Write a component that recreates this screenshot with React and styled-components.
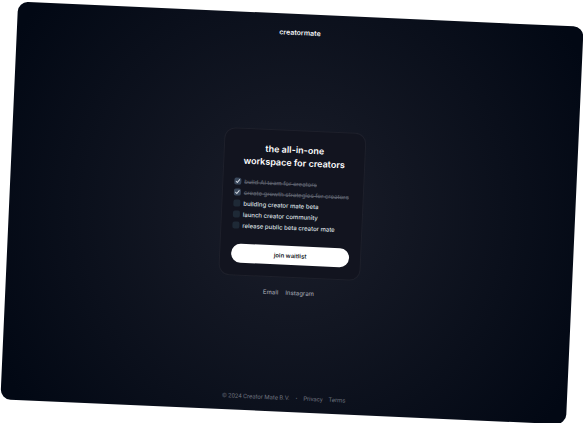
import React, { useState } from "react";
import styled, { createGlobalStyle } from "styled-components";

const GlobalStyle = createGlobalStyle`
  *, *::before, *::after { box-sizing: border-box; }
  body {
    margin: 0;
    background: #ffffff;
    font-family: Inter, "Liberation Sans", sans-serif;
    -webkit-font-smoothing: antialiased;
  }
`;

const Stage = styled.div`
  display: flex;
  min-height: 100vh;
  padding: 14px 8px 11px 9px;
  overflow: hidden;
`;

const Panel = styled.div`
  flex: 1;
  display: grid;
  grid-template-rows: 1fr auto 1fr;
  justify-items: center;
  border-radius: 10px;
  background: radial-gradient(circle at center, #1b1e2a 0%, #020814 95%);
  transform: rotate(2.55deg);
`;

const Header = styled.header`
  padding-top: 14px;
`;

const Brand = styled.a`
  display: block;
  color: #f4f5f7;
  font-size: 7px;
  font-weight: 600;
  line-height: 9px;
  text-decoration: none;
`;

const Main = styled.main`
  display: flex;
  flex-direction: column;
  align-items: center;
  gap: 11px;
`;

const Card = styled.section`
  width: 142px;
  padding: 12px 11px;
  border: 1px solid #1e202b;
  border-radius: 11px;
  background: #12141f;
`;

const Title = styled.h1`
  margin: 0 0 9px;
  color: #ffffff;
  font-size: 9px;
  font-weight: 600;
  line-height: 13px;
  text-align: center;
  white-space: nowrap;
`;

const Checklist = styled.ul`
  margin: 0 0 13px;
  padding: 0;
  list-style: none;
`;

const Task = styled.label`
  display: flex;
  align-items: center;
  gap: 3px;
  color: ${(p) => (p.$done ? "#5c606c" : "#dfe1e6")};
  font-size: 6px;
  font-weight: 500;
  line-height: 11px;
  text-decoration: ${(p) => (p.$done ? "line-through" : "none")};
  white-space: nowrap;
`;

const Tick = styled.span`
  display: grid;
  place-items: center;
  flex: none;

  & > * { grid-area: 1 / 1; }
`;

const TickInput = styled.input`
  appearance: none;
  width: 7px;
  height: 7px;
  margin: 0;
  border-radius: 2px;
  background: #1e2936;

  &:checked { background: #3a485c; }
`;

const TickMark = styled.svg`
  width: 5px;
  height: 5px;
  fill: none;
  stroke: #d5dbe4;
  stroke-width: 2;
  stroke-linecap: round;
  stroke-linejoin: round;
  pointer-events: none;
`;

const JoinButton = styled.button`
  display: block;
  width: 100%;
  height: 19px;
  padding: 0;
  border: 0;
  border-radius: 10px;
  background: #ffffff;
  color: #151925;
  font: inherit;
  font-size: 6px;
  font-weight: 600;
  line-height: 9px;
`;

const Links = styled.nav`
  display: flex;
  gap: 7px;
  font-size: 6px;
  font-weight: 500;
  line-height: 8px;
`;

const TextLink = styled.a`
  color: ${(p) => (p.$muted ? "#6f737e" : "#9b9ea7")};
  text-decoration: none;
`;

const Footer = styled.footer`
  align-self: end;
  display: flex;
  gap: 6px;
  padding-bottom: 10px;
  color: #6f737e;
  font-family: Roboto, "Liberation Sans", sans-serif;
  font-size: 6px;
  line-height: 8px;
`;

const Dot = styled.span`
  color: #8a8e99;
  font-weight: 700;
`;

const initialTasks = [
  { id: "team", label: "build AI team for creators", done: true },
  { id: "growth", label: "create growth strategies for creators", done: true },
  { id: "beta", label: "building creator mate beta", done: false },
  { id: "community", label: "launch creator community", done: false },
  { id: "public", label: "release public beta creator mate", done: false },
];

export default function App() {
  const [tasks, setTasks] = useState(initialTasks);
  const toggle = (id) =>
    setTasks((list) => list.map((t) => (t.id === id ? { ...t, done: !t.done } : t)));

  return (
    <>
      <GlobalStyle />
      <Stage>
        <Panel>
          <Header>
            <Brand href="#">creatormate</Brand>
          </Header>
          <Main>
            <Card>
              <Title>
                the all-in-one
                <br />
                workspace for creators
              </Title>
              <Checklist>
                {tasks.map((t) => (
                  <li key={t.id}>
                    <Task htmlFor={t.id} $done={t.done}>
                      <Tick>
                        <TickInput
                          id={t.id}
                          type="checkbox"
                          checked={t.done}
                          onChange={() => toggle(t.id)}
                        />
                        {t.done && (
                          <TickMark viewBox="0 0 10 10" aria-hidden="true">
                            <path d="M1.5 5.5 4 8 8.5 2" />
                          </TickMark>
                        )}
                      </Tick>
                      {t.label}
                    </Task>
                  </li>
                ))}
              </Checklist>
              <JoinButton type="button">join waitlist</JoinButton>
            </Card>
            <Links>
              <TextLink href="#email">Email</TextLink>
              <TextLink href="#instagram">Instagram</TextLink>
            </Links>
          </Main>
          <Footer>
            <span>© 2024 Creator Mate B.V.</span>
            <Dot>·</Dot>
            <TextLink href="#privacy" $muted>Privacy</TextLink>
            <TextLink href="#terms" $muted>Terms</TextLink>
          </Footer>
        </Panel>
      </Stage>
    </>
  );
}
